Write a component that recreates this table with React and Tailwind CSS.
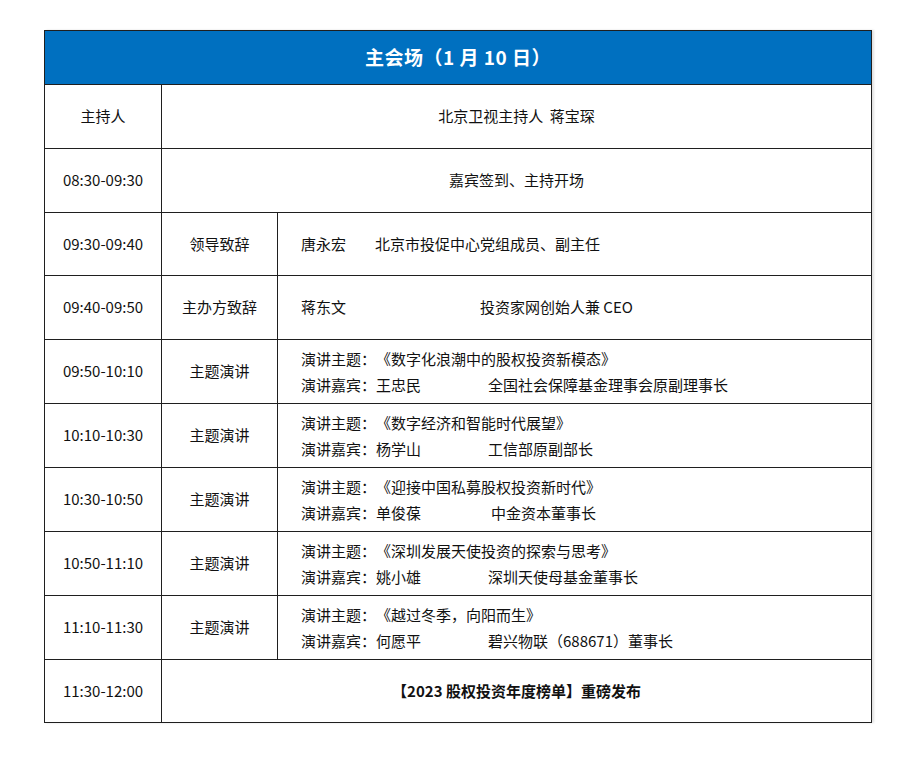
const rows = [
  { time: '09:50-10:10', topic: '《数字化浪潮中的股权投资新模态》', guest: '王忠民', title: '全国社会保障基金理事会原副理事长' },
  { time: '10:10-10:30', topic: '《数字经济和智能时代展望》', guest: '杨学山', title: '工信部原副部长' },
  { time: '10:30-10:50', topic: '《迎接中国私募股权投资新时代》', guest: '单俊葆', title: '中金资本董事长', shift: true },
  { time: '10:50-11:10', topic: '《深圳发展天使投资的探索与思考》', guest: '姚小雄', title: '深圳天使母基金董事长' },
  { time: '11:10-11:30', topic: '《越过冬季，向阳而生》', guest: '何愿平', title: '碧兴物联（688671）董事长' },
];

const cell = 'border border-[#1f1f1f] h-[64px] align-middle';
const cellShort = 'border border-[#1f1f1f] h-[63px] align-middle';

export default function App() {
  return (
    <div className="min-h-screen bg-white pt-[30px] pl-[44px] text-[15px] text-[#111] font-['Noto_Sans_CJK_SC','Noto_Sans',sans-serif] [text-spacing-trim:space-all]">
      <table className="border-collapse w-[828px] table-fixed shadow-[2px_0_2px_rgba(0,0,0,0.12)]">
        <colgroup>
          <col className="w-[117px]" />
          <col className="w-[116px]" />
          <col />
        </colgroup>
        <tbody>
          <tr>
            <td colSpan={3} className="border border-[#1f1f1f] bg-[#0070c0] h-[54px] text-center align-middle text-white text-[19px] tracking-[0.5px] font-bold">
              主会场（1 月 10 日）
            </td>
          </tr>
          <tr>
            <td className={`${cell} text-center`}>主持人</td>
            <td colSpan={2} className={`${cell} text-center`}>北京卫视主持人&nbsp;&nbsp;蒋宝琛</td>
          </tr>
          <tr>
            <td className={`${cell} text-center`}>08:30-09:30</td>
            <td colSpan={2} className={`${cell} text-center`}>嘉宾签到、主持开场</td>
          </tr>
          <tr>
            <td className={`${cellShort} text-center`}>09:30-09:40</td>
            <td className={`${cellShort} text-center`}>领导致辞</td>
            <td className={`${cellShort} pl-[23px]`}>
              <span className="inline-block w-[74px]">唐永宏</span>北京市投促中心党组成员、副主任
            </td>
          </tr>
          <tr>
            <td className={`${cell} text-center`}>09:40-09:50</td>
            <td className={`${cell} text-center`}>主办方致辞</td>
            <td className={`${cell} pl-[23px]`}>
              <span className="inline-block w-[179px]">蒋东文</span>投资家网创始人兼 CEO
            </td>
          </tr>
          {rows.map((r) => (
            <tr key={r.time}>
              <td className={`${cell} text-center`}>{r.time}</td>
              <td className={`${cell} text-center`}>主题演讲</td>
              <td className={`${cell} pl-[23px] leading-[26px]`}>
                <div>演讲主题：{r.topic}</div>
                <div>
                  <span className={r.shift ? 'inline-block w-[190px]' : 'inline-block w-[187px]'}>演讲嘉宾：{r.guest}</span>
                  {r.title}
                </div>
              </td>
            </tr>
          ))}
          <tr>
            <td className={`${cellShort} text-center`}>11:30-12:00</td>
            <td colSpan={2} className={`${cellShort} text-center font-bold`}>【2023 股权投资年度榜单】重磅发布</td>
          </tr>
        </tbody>
      </table>
    </div>
  );
}
